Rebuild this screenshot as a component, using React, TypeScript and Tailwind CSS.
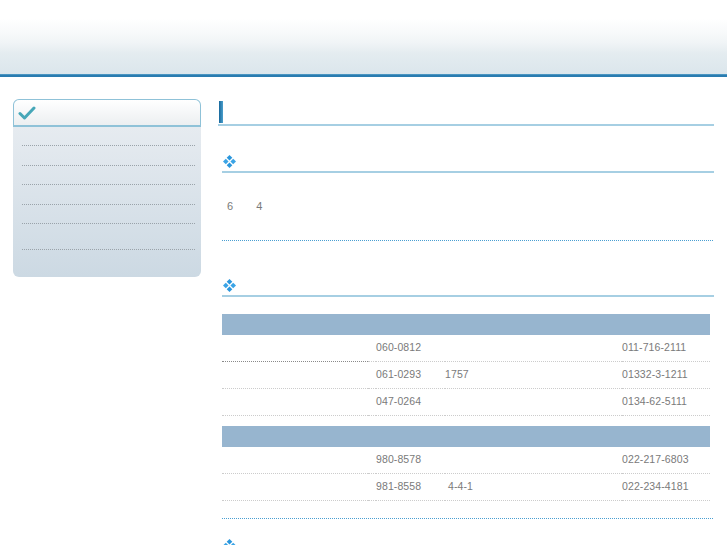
import React from "react";

function Diamond() {
  return (
    <svg width="13" height="13" viewBox="0 0 13 13" className="block">
      <polygon points="6.5,0 9.3,2.8 6.5,5.6 3.7,2.8" fill="#2a96dc" />
      <polygon points="6.5,7.4 9.3,10.2 6.5,13 3.7,10.2" fill="#2a96dc" />
      <polygon points="0,6.5 2.8,3.7 5.6,6.5 2.8,9.3" fill="#3aa4e6" />
      <polygon points="7.4,6.5 10.2,3.7 13,6.5 10.2,9.3" fill="#3aa4e6" />
    </svg>
  );
}

function SectionHead() {
  return (
    <div className="ml-[4px] flex h-[18px] w-[492px] items-start border-b-2 border-[#a6cfe3] pl-[1px]">
      <Diamond />
    </div>
  );
}

function BlueDots() {
  return <div className="h-px w-[492px] bg-[repeating-linear-gradient(to_right,#4a9fd2_0px,#4a9fd2_1px,transparent_1px,transparent_2px)]" />;
}

const rowsA = [
  { zip: "060-0812", addr: "", tel: "011-716-2111", first: true },
  { zip: "061-0293", addr: "1757", tel: "01332-3-1211" },
  { zip: "047-0264", addr: "", tel: "0134-62-5111" },
];

const rowsB = [
  { zip: "980-8578", addr: "", tel: "022-217-6803" },
  { zip: "981-8558", addr: "\u00a04-4-1", tel: "022-234-4181" },
];

function Row({ zip, addr, tel, first }: { zip: string; addr: string; tel: string; first?: boolean }) {
  return (
    <div className="grid h-[27px] grid-cols-[146px_8px_69px_177px_1fr] items-center text-[10.5px] tracking-[0.1px] text-[#7a7a7a]">
      <div className={"h-full border-b border-dotted " + (first ? "border-[#8a8a8a]" : "border-[#cccccc]")} />
      <div className="h-full border-b border-dotted border-[#cccccc]" />
      <div className="flex h-full items-center border-b border-dotted border-[#cccccc]">{zip}</div>
      <div className="flex h-full items-center border-b border-dotted border-[#cccccc]">{addr}</div>
      <div className="flex h-full items-center border-b border-dotted border-[#cccccc]">{tel}</div>
    </div>
  );
}

export default function App() {
  return (
    <div className="min-h-[545px] bg-white font-['Liberation_Sans',Arial,sans-serif]">
      <div className="h-[74px] bg-[linear-gradient(to_bottom,#ffffff_0%,#ffffff_25%,#f7f9fa_45%,#f0f4f6_58%,#e4ecf0_72%,#dbe6ec_100%)]" />
      <div className="h-[3px] bg-[linear-gradient(to_bottom,#5ea6cc_0%,#2a7cb0_40%,#2a7cb0_100%)]" />

      <div className="flex pt-[22px]">
        <aside className="ml-[13px] w-[188px] shrink-0">
          <div className="flex h-[28px] items-center rounded-t-[6px] border border-b-2 border-[#8fc2d8] bg-[linear-gradient(to_bottom,#ffffff,#eceff1)] pl-[4px]">
            <svg width="18" height="16" viewBox="0 0 18 16">
              <polyline points="2,8.5 6.5,13 16,3" fill="none" stroke="#46a7b8" strokeWidth="3" strokeLinecap="round" strokeLinejoin="round" />
            </svg>
          </div>
          <div className="h-[150px] rounded-b-[6px] bg-[linear-gradient(to_bottom,#e6ebf0,#ccd9e3)] pl-[9px] pr-[6px]">
            <div className="h-[19px] border-b border-dotted border-[#9aa3aa]" />
            <div className="h-[20px] border-b border-dotted border-[#9aa3aa]" />
            <div className="h-[19px] border-b border-dotted border-[#9aa3aa]" />
            <div className="h-[20px] border-b border-dotted border-[#9aa3aa]" />
            <div className="h-[19px] border-b border-dotted border-[#9aa3aa]" />
            <div className="h-[26px] border-b border-dotted border-[#9aa3aa]" />
          </div>
        </aside>

        <main className="ml-[17px] w-[496px] shrink-0">
          <div className="flex h-[27px] items-start border-b-2 border-[#a6cfe3] pt-[2px]">
            <div className="ml-[1px] h-[22px] w-[4px] bg-[linear-gradient(to_right,#17689c,#4b9fcc)]" />
          </div>

          <div className="mt-[29px]">
            <SectionHead />
          </div>
          <div className="ml-[4px] flex h-[67px] items-center gap-[23px] pl-[5px] text-[11px] text-[#7a7a7a]">
            <span>6</span>
            <span>4</span>
          </div>
          <div className="ml-[4px]">
            <BlueDots />
          </div>

          <div className="mt-[38px]">
            <SectionHead />
          </div>

          <div className="ml-[4px] mt-[17px] w-[488px]">
            <div className="h-[21px] bg-[#97b5cf]" />
            {rowsA.map((r) => (
              <Row key={r.zip} {...r} />
            ))}
            <div className="mt-[10px] h-[21px] bg-[#97b5cf]" />
            {rowsB.map((r) => (
              <Row key={r.zip} {...r} />
            ))}
          </div>
          <div className="ml-[4px] mt-[17px]">
            <BlueDots />
          </div>

          <div className="mt-[20px]">
            <SectionHead />
          </div>
        </main>
      </div>
    </div>
  );
}
